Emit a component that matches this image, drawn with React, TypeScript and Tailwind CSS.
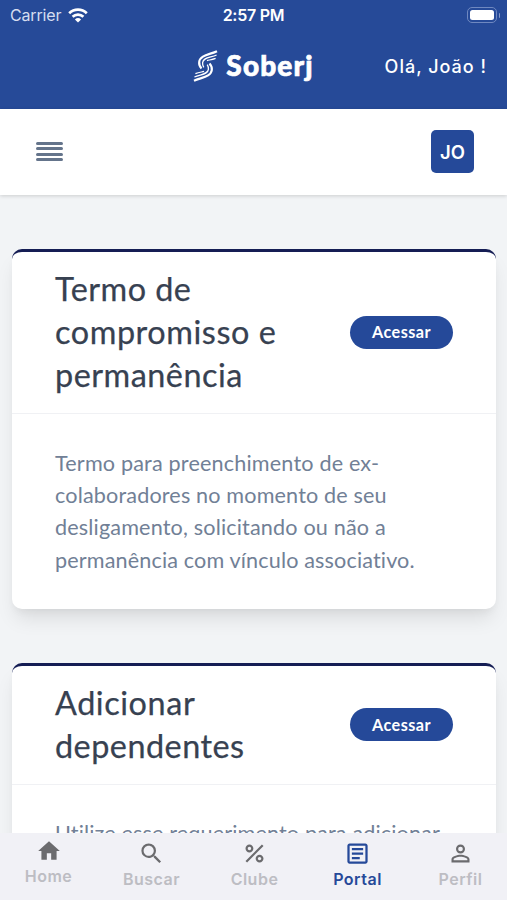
import React from 'react';
import { MdHome, MdSearch, MdPercent, MdOutlineArticle, MdPersonOutline } from 'react-icons/md';

type Line = { text: string; spacing: string };

function StatusBar() {
  return (
    <div className="flex h-[30px] items-center text-white">
      <div className="flex flex-1 items-center gap-[6.500px] pl-[10px]">
        <span className="text-[16px] leading-none tracking-[-0.15px] text-[#d5ddf0]">Carrier</span>
        <svg className="h-[15px] w-[20px]" viewBox="0 0 20 15" fill="none" stroke="#fff" strokeWidth="2.7">
          <path d="M1.2 5.2a12.6 12.6 0 0 1 17.6 0" />
          <path d="M4.6 8.8a7.7 7.7 0 0 1 10.8 0" />
          <path d="M10 14.6 6.9 11.5a4.5 4.5 0 0 1 6.2 0Z" fill="#fff" stroke="none" />
        </svg>
      </div>
      <span className="pr-[3px] text-[16px] font-semibold leading-none tracking-[-0.25px]">2:57 PM</span>
      <div className="flex flex-1 items-center justify-end gap-[1.500px] pr-[7px]">
        <div className="h-[16px] w-[30px] rounded-[5px] border border-[#6f88c0] p-[2px]">
          <div className="h-full w-full rounded-[2.5px] bg-white" />
        </div>
        <div className="h-[5px] w-[1.5px] rounded-r-full bg-[#8499c9]" />
      </div>
    </div>
  );
}

function Logo() {
  return (
    <div className="flex items-center gap-[8px]">
      <svg className="h-[32px] w-[25px]" viewBox="0 0 25 32" fill="none" stroke="#fff">
        <path d="M24 1.200C17 4.600 7 5 6.200 12c-.3 2.600.6 4.600 2.300 6.400" strokeWidth="2.200" />
        <path d="M23.600 5C17 7.800 10.200 7.600 9.600 12.600c-.2 1.900.3 3.400 1.200 4.800" strokeWidth="1.300" />
        <path d="M22.600 8.400C18.500 10 16 9.900 14 10.600" strokeWidth="1.200" />
        <path d="M1 30.800C8 27.400 18 27 18.800 20c.3-2.600-.6-4.600-2.300-6.400" strokeWidth="2.200" />
        <path d="M1.400 27C8 24.200 14.800 24.400 15.400 19.400c.2-1.900-.3-3.400-1.200-4.800" strokeWidth="1.300" />
        <path d="M2.400 23.600C6.500 22 9 22.100 11 21.400" strokeWidth="1.200" />
      </svg>
      <span className="-mt-[3px] font-['Lato'] text-[28px] font-black leading-none tracking-[1.15px] text-white [-webkit-text-stroke:0.7px_white]">Soberj</span>
    </div>
  );
}

function Card({ title, body }: { title: Line[]; body: Line[] }) {
  return (
    <section className="rounded-[10px] border-t-[3px] border-[#151d54] bg-white font-['Lato',sans-serif] shadow-[0_13px_20px_-4px_rgba(0,0,0,0.1),0_5px_8px_-3px_rgba(0,0,0,0.05)]">
      <div className="flex items-center justify-between border-b border-[#f0f1f4] px-[43px] py-4">
        <h2 className="-mt-[0.500px] mb-[0.500px] text-[32.400px] leading-[43.200px] text-[#374151] [-webkit-text-stroke:0.25px_#374151]">
          {title.map((l) => (
            <span key={l.text} className="block whitespace-nowrap" style={{ letterSpacing: l.spacing }}>{l.text}</span>
          ))}
        </h2>
        <button className="h-[33px] w-[103px] shrink-0 rounded-full bg-[#254999] text-[16.200px] font-bold tracking-[0.45px] text-white">Acessar</button>
      </div>
      <p className="px-[43px] py-[32.400px] text-[21.600px] leading-[32.400px] text-[#718096]">
        {body.map((l) => (
          <span key={l.text} className="block whitespace-nowrap" style={{ letterSpacing: l.spacing }}>{l.text}</span>
        ))}
      </p>
    </section>
  );
}

const tabs = [
  { label: 'Home', Icon: MdHome, size: 26, active: false },
  { label: 'Buscar', Icon: MdSearch, size: 27, active: false },
  { label: 'Clube', Icon: MdPercent, size: 27, active: false },
  { label: 'Portal', Icon: MdOutlineArticle, size: 27, active: true },
  { label: 'Perfil', Icon: MdPersonOutline, size: 27, active: false },
];

function TabBar() {
  return (
    <nav className="-mr-[1px] flex h-[67px] shrink-0 justify-between bg-[#f1f1f6] pl-[1px]">
      {tabs.map(({ label, Icon, size, active }) => (
        <div key={label} className={`flex w-[95px] flex-col items-center ${label === 'Home' ? 'pt-[4.500px]' : 'pt-[6.500px]'} ${active ? 'text-[#254999]' : 'text-[#6b6b6e]'}`}>
          <Icon size={size} />
          <span className={`mt-[2px] text-[16px] font-semibold leading-[20px] tracking-[0.5px] ${active ? 'text-[#254999]' : 'text-[#bdbdc3]'}`}>{label}</span>
        </div>
      ))}
    </nav>
  );
}

export default function App() {
  return (
    <div className="flex h-[900px] w-[507px] flex-col overflow-hidden bg-[#f2f4f6] font-['Inter',sans-serif]">
      <header className="h-[108.500px] shrink-0 bg-[#264a98]">
        <StatusBar />
        <div className="grid h-[72px] grid-cols-[1fr_auto_1fr] items-center">
          <span />
          <Logo />
          <span className="pr-[20px] text-right text-[18px] font-medium tracking-[1px] text-white">Olá, João !</span>
        </div>
      </header>
      <div className="z-10 flex h-[86px] shrink-0 items-center justify-between bg-white pl-[36px] pr-[33px] shadow-[0_1px_4px_rgba(0,0,0,0.16)]">
        <div className="flex flex-col gap-[2.600px]">
          <span className="h-[2.800px] w-[27px] rounded-full bg-[#64748b]" />
          <span className="h-[2.800px] w-[27px] rounded-full bg-[#64748b]" />
          <span className="h-[2.800px] w-[27px] rounded-full bg-[#64748b]" />
          <span className="h-[2.800px] w-[27px] rounded-full bg-[#64748b]" />
        </div>
        <div className="flex h-[43px] w-[43px] items-center justify-center rounded-[5px] bg-[#254999] pt-[3px] text-[18.500px] font-semibold text-white">JO</div>
      </div>
      <main className="flex min-h-0 flex-1 flex-col gap-[54px] overflow-hidden pl-[12px] pr-[11px] pt-[54px]">
        <Card
          title={[
            { text: 'Termo de', spacing: '0.48px' },
            { text: 'compromisso e', spacing: '0.57px' },
            { text: 'permanência', spacing: '0.5px' },
          ]}
          body={[
            { text: 'Termo para preenchimento de ex-', spacing: '0.17px' },
            { text: 'colaboradores no momento de seu', spacing: '0.15px' },
            { text: 'desligamento, solicitando ou não a', spacing: '0.16px' },
            { text: 'permanência com vínculo associativo.', spacing: '0.14px' },
          ]}
        />
        <Card
          title={[
            { text: 'Adicionar', spacing: '0.58px' },
            { text: 'dependentes', spacing: '0.48px' },
          ]}
          body={[{ text: 'Utilize esse requerimento para adicionar', spacing: '0.14px' }]}
        />
      </main>
      <TabBar />
    </div>
  );
}
